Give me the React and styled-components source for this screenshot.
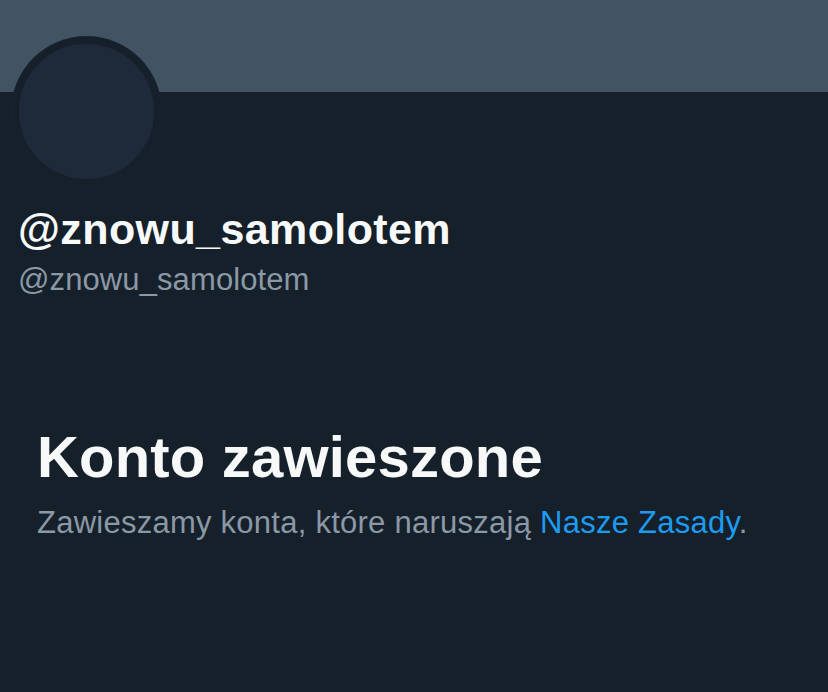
import styled, { createGlobalStyle } from "styled-components";

const GlobalStyle = createGlobalStyle`
  html, body {
    margin: 0;
    padding: 0;
    background-color: #15202b;
  }
  body {
    font-family: "Liberation Sans", Arial, sans-serif;
  }
`;

const Page = styled.div`
  min-height: 100vh;
  background-color: #15202b;
  overflow: hidden;
`;

const Banner = styled.div`
  height: 92px;
  background-color: #425364;
`;

const Profile = styled.section`
  padding: 0 18px;
  display: flex;
  flex-direction: column;
`;

const Avatar = styled.div`
  width: 135px;
  height: 135px;
  margin-top: -55px;
  margin-left: -6px;
  border-radius: 50%;
  border: 7px solid #15202b;
  background-color: #1e2a3a;
  box-shadow: 0 0 0 1px #182431;
`;

const Name = styled.h1`
  margin: 19px 0 0;
  font-size: 43px;
  line-height: 48px;
  font-weight: 700;
  color: #f7f9f9;
  letter-spacing: 0.4px;
`;

const Handle = styled.div`
  margin-top: 9px;
  font-size: 31px;
  line-height: 36px;
  color: #8b98a5;
  letter-spacing: 0.1px;
`;

const Notice = styled.section`
  padding: 125px 37px 0;
  display: flex;
  flex-direction: column;
  gap: 12px;
`;

const Title = styled.h2`
  margin: 0;
  font-size: 58px;
  line-height: 68px;
  font-weight: 700;
  color: #f7f9f9;
  letter-spacing: 0.2px;
`;

const Text = styled.p`
  margin: 0;
  font-size: 31px;
  line-height: 40px;
  color: #8b98a5;
  letter-spacing: 0.25px;
`;

const Link = styled.a`
  color: #1d9bf0;
  text-decoration: none;
`;

export default function App() {
  return (
    <Page>
      <GlobalStyle />
      <Banner />
      <Profile>
        <Avatar />
        <Name>@znowu_samolotem</Name>
        <Handle>@znowu_samolotem</Handle>
      </Profile>
      <Notice>
        <Title>Konto zawieszone</Title>
        <Text>
          Zawieszamy konta, które naruszają <Link href="#">Nasze Zasady</Link>.
        </Text>
      </Notice>
    </Page>
  );
}
